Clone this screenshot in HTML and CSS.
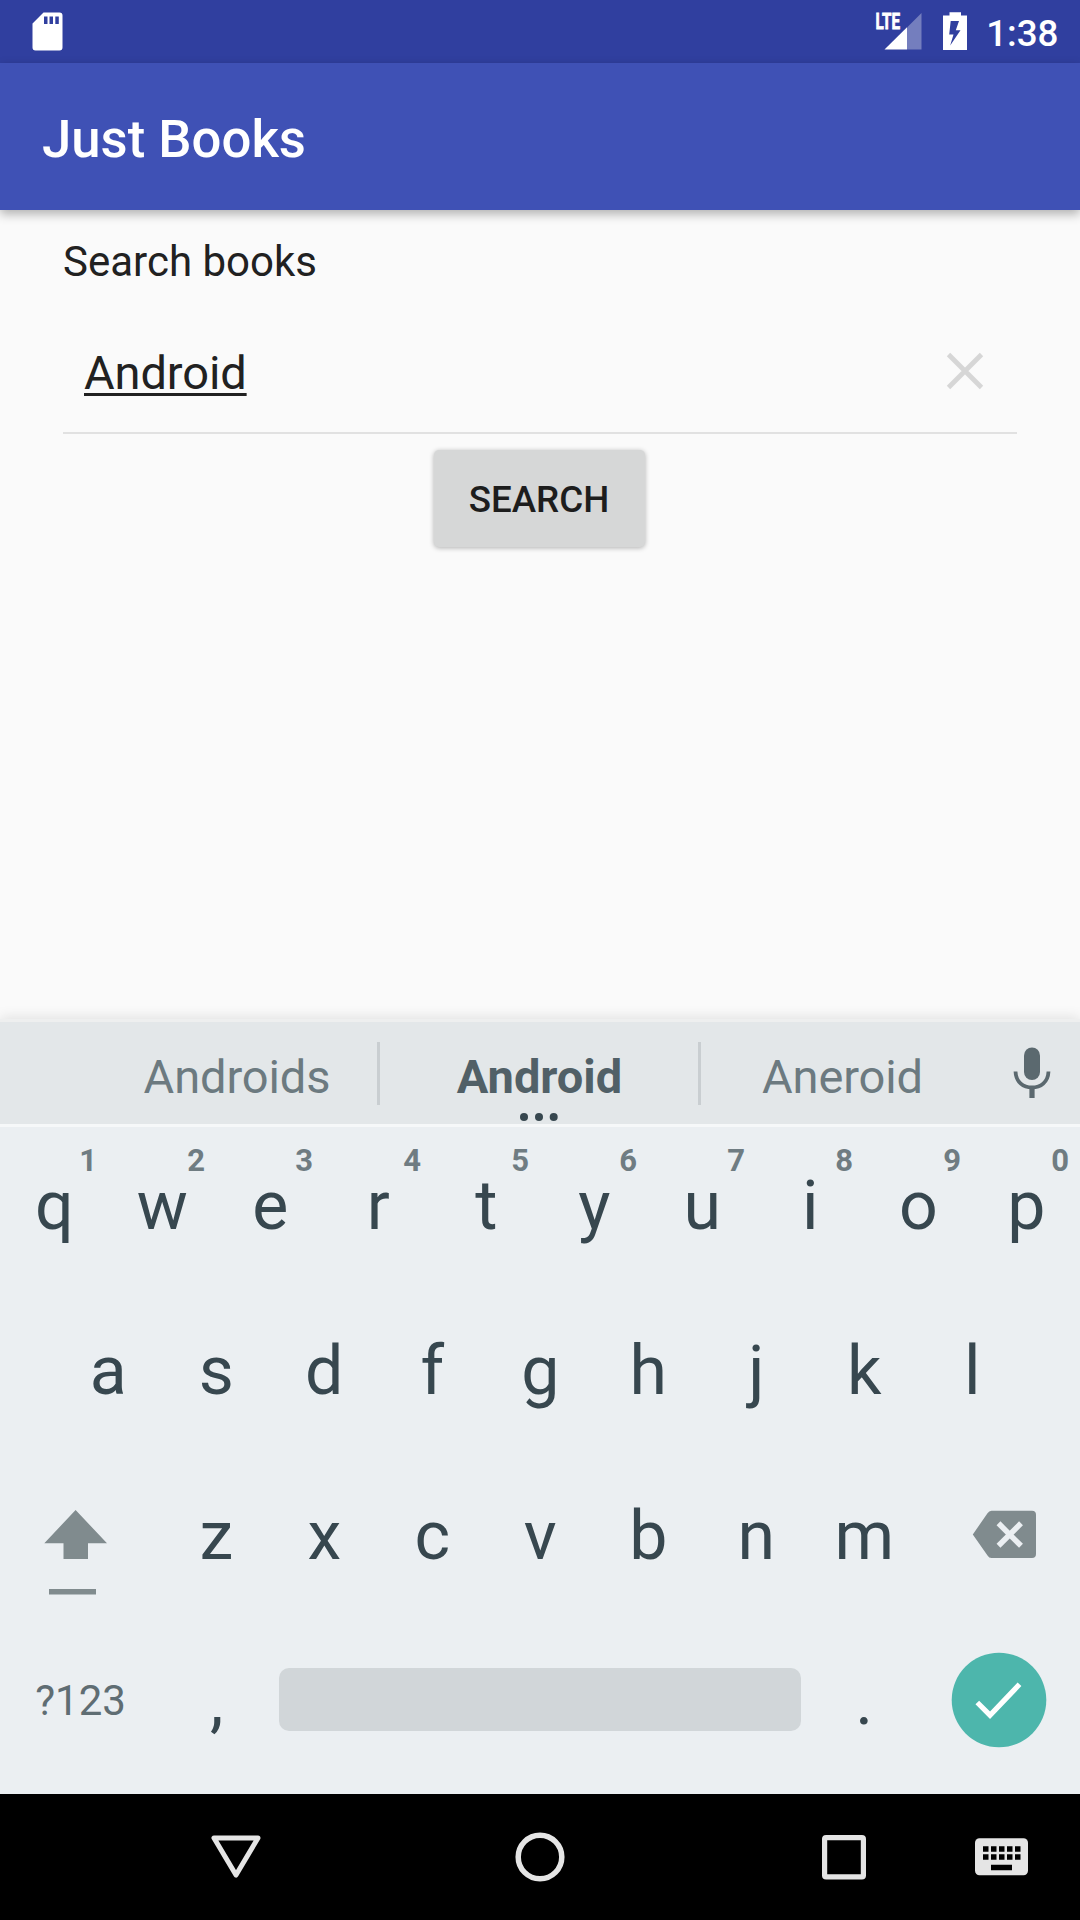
FILE: index.html
```html
<!DOCTYPE html>
<html lang="en">
<head>
<meta charset="utf-8">
<title>Just Books</title>
<link rel="stylesheet" href="styles.css">
</head>
<body>
<div class="screen">
  <header class="status-bar">
    <svg class="status-sd" width="31" height="39" viewBox="0 0 31 39"><path fill="#fff" fill-rule="evenodd" d="M11.500 0.500H27.500a3 3 0 0 1 3 3V35.500a3 3 0 0 1-3 3H3.500a3 3 0 0 1-3-3V11.500ZM12 4.500v7.500h3.500v-7.500ZM17.500 4.500v7.500h3.500v-7.500ZM23.300 4.500v7.500h3.500v-7.500Z"/></svg>
    <div class="status-right">
      <svg class="status-signal" width="54" height="46" viewBox="-6 -8 54 46"><path fill="#fff" fill-opacity=".33" d="M32 15.500 46.500 1v36.500H32Z"/><path fill="#fff" d="M9.500 37.500 32 15.200V37.500Z"/><text class="lte" x="0.500" y="17" textLength="24.500" lengthAdjust="spacingAndGlyphs">LTE</text></svg>
      <svg class="status-battery" width="24" height="38" viewBox="0 0 24 38"><path fill="#fff" fill-rule="evenodd" d="M6.500 0.300H18V3.500H24V38H0V3.500H6.500ZM7.700 9 6.200 22.500H10.500L7.200 33.500 17.500 18.200H12.800L16 9Z"/></svg>
      <span class="clock">1:38</span>
    </div>
  </header>
  <div class="app-bar"><h1>Just Books</h1></div>

  <main class="content">
    <div class="label">Search books</div>
    <div class="search-field">
      <span class="query">Android</span>
      <svg width="38" height="38" viewBox="0 0 38 38"><path d="M2.500 2.500 35.500 35.500M35.500 2.500 2.500 35.500" stroke="#d6d6d6" stroke-width="4.800"/></svg>
    </div>
    <button class="search-button" type="button">SEARCH</button>
  </main>

  <section class="keyboard">
    <div class="suggestions">
      <span class="word">Androids</span>
      <span class="word best">Android<svg class="more" width="40" height="8" viewBox="0 0 40 8"><circle cx="5" cy="4" r="4"/><circle cx="20" cy="4" r="4"/><circle cx="34.700" cy="4" r="4"/></svg></span>
      <span class="word">Aneroid</span>
      <svg class="mic" width="38" height="52" viewBox="0 0 38 52"><rect x="11" y="0.500" width="16" height="32.500" rx="8" fill="#5b696f"/><path d="M2.500 24.500C3 35.500 10.500 40.500 19 40.500S35 35.500 35.500 24.500" fill="none" stroke="#5b696f" stroke-width="3.800"/><path d="M16.400 40H21.600V51H16.400Z" fill="#5b696f"/></svg>
    </div>
    <div class="key-row">
      <span class="key">q<sup>1</sup></span><span class="key">w<sup>2</sup></span><span class="key">e<sup>3</sup></span><span class="key">r<sup>4</sup></span><span class="key">t<sup>5</sup></span><span class="key">y<sup>6</sup></span><span class="key">u<sup>7</sup></span><span class="key">i<sup>8</sup></span><span class="key">o<sup>9</sup></span><span class="key">p<sup>0</sup></span>
    </div>
    <div class="key-row">
      <span class="key">a</span><span class="key">s</span><span class="key">d</span><span class="key">f</span><span class="key">g</span><span class="key">h</span><span class="key">j</span><span class="key">k</span><span class="key">l</span>
    </div>
    <div class="key-row">
      <svg width="162" height="165" viewBox="0 0 162 165"><path fill="#808b8e" d="M75.600 53 107 86.300H88V102H63.500V86.300H44.300ZM49 132H96V137.500H49Z"/></svg>
      <span class="key">z</span><span class="key">x</span><span class="key">c</span><span class="key">v</span><span class="key">b</span><span class="key">n</span><span class="key">m</span>
      <svg width="162" height="165" viewBox="0 0 162 165"><path fill="#808b8e" d="M73.500 53.800H114a4 4 0 0 1 4 4V97a4 4 0 0 1-4 4H73.500Q71 101 69.500 98.500L54.800 77.400 69.500 56.300Q71 53.800 73.500 53.800Z"/><path d="M80.500 66.300 103 88.800M103 66.300 80.500 88.800" stroke="#ebeff2" stroke-width="5.500"/></svg>
    </div>
    <div class="key-row">
      <span class="key symbols">?123</span>
      <span class="key comma">,</span>
      <span class="space"></span>
      <span class="key">.</span>
      <svg width="162" height="165" viewBox="0 0 162 165"><circle cx="81" cy="78" r="47.300" fill="#4db6ac"/><path d="M59.300 80.500 72 93.200 101.500 62.300" fill="none" stroke="#fff" stroke-width="5.200"/></svg>
    </div>
  </section>

  <nav class="nav-bar">
    <svg width="50" height="50" viewBox="0 0 50 50"><path d="M3 6H47L25 43Z" fill="none" stroke="#e5e5e5" stroke-width="5" stroke-linejoin="round"/></svg>
    <svg width="50" height="50" viewBox="0 0 50 50"><circle cx="25" cy="25" r="21.800" fill="none" stroke="#e5e5e5" stroke-width="5.500"/></svg>
    <svg width="50" height="50" viewBox="0 0 50 50"><rect x="5.600" y="5.600" width="38.800" height="39.300" rx="1.500" fill="none" stroke="#e5e5e5" stroke-width="5.200"/></svg>
    <svg width="53" height="38" viewBox="0 0 53 38"><rect y=".3" width="53" height="37" rx="4.500" fill="#e5e5e5"/><path d="M8 11H46M8 19H46" stroke="#000" stroke-width="5.500" stroke-dasharray="5.500 2.500"/><path d="M16 29.500H37" stroke="#000" stroke-width="5.500"/></svg>
  </nav>
</div>
</body>
</html>
```
FILE: styles.css
```css
* { box-sizing: border-box; }
body { margin: 0; font-family: Roboto, sans-serif; }
svg { display: block; flex: none; }

.screen {
  width: 1080px;
  height: 1920px;
  display: flex;
  flex-direction: column;
  background: #fafafa;
  overflow: hidden;
}

/* status bar */
.status-bar {
  height: 63px;
  flex: none;
  display: flex;
  justify-content: space-between;
  padding: 12px 21.500px 0 32px;
  background: #303f9f;
}
.status-right { display: flex; }
.status-signal { margin-top: -8px; overflow: visible; }
.status-battery { margin-left: 20px; }
.lte { font: 700 22px Roboto, sans-serif; fill: #fff; stroke: #fff; stroke-width: .8px; }
.clock {
  margin-left: 19.500px;
  font-size: 36.75px;
  font-weight: 500;
  line-height: 43px;
  color: #fff;
}

/* app bar */
.app-bar {
  height: 147px;
  flex: none;
  display: flex;
  align-items: center;
  padding: 5px 42px 0;
  background: #3f51b5;
  box-shadow: 0 4px 10px rgba(0, 0, 0, .3);
}
.app-bar h1 {
  margin: 0;
  font-size: 52.7px;
  font-weight: 500;
  color: #fff;
}

/* search form */
.content {
  flex: 1;
  display: flex;
  flex-direction: column;
  align-items: center;
  padding: 27px 63px 0;
  color: #212121;
}
.label { align-self: flex-start; font-size: 42px; line-height: 49px; }
.search-field {
  align-self: stretch;
  height: 121px;
  margin-top: 27px;
  padding: 0 33.500px 0 21px;
  display: flex;
  align-items: center;
  justify-content: space-between;
  border-bottom: 2px solid #e1e1e1;
}
.search-field svg { margin-bottom: 4px; }
.query {
  font-size: 47px;
  letter-spacing: -.1px;
  text-decoration: underline;
  text-decoration-thickness: 3px;
  text-underline-offset: 4px;
  text-decoration-skip-ink: none;
}
.search-button {
  width: 211px;
  height: 97px;
  margin: 15.500px 1px 0 0;
  padding: 2px 1px 0 0;
  border: 0;
  border-radius: 5px;
  background: #d6d7d7;
  box-shadow: 0 1px 5px rgba(0, 0, 0, .3);
  color: #1d1d1d;
  font: 500 36.75px Roboto, sans-serif;
}

/* keyboard */
.keyboard {
  flex: none;
  border-top: 3px solid #eeefef;
  background: #ebeff2;
  box-shadow: 0 -2px 12px rgba(0, 0, 0, .1);
}
.suggestions {
  height: 105px;
  display: grid;
  grid-template-columns: 284px 321px 285px 95px;
  padding-left: 95px;
  background: #e3e7e9;
  border-bottom: 3px solid #f6f8f9;
}
.word {
  position: relative;
  font-size: 47px;
  letter-spacing: -.1px;
  line-height: 107px;
  height: 102px;
  padding-top: 1px;
  text-align: center;
  color: #6c7a80;
}
.word + .word::before {
  content: "";
  position: absolute;
  left: -2px;
  top: 20px;
  width: 3px;
  height: 63px;
  background: #c9ced1;
}
.best { font-weight: 700; letter-spacing: 0; color: #516067; }
.more {
  position: absolute;
  left: 140px;
  bottom: 3.500px;
  fill: #37474f;
}
.mic { margin: 25px 0 0 28px; }

.key-row { display: flex; justify-content: center; height: 165px; }
.key-row:last-child { height: 172px; }
.key {
  position: relative;
  width: 108px;
  padding-left: .6px;
  font-size: 68px;
  line-height: 158px;
  text-align: center;
  color: #37474f;
}
.key sup {
  position: absolute;
  right: 11px;
  top: 16px;
  font-size: 31px;
  font-weight: 700;
  line-height: 36px;
  color: #6f7c82;
}
.key.symbols { width: 162px; padding-right: 1.500px; font-size: 42px; color: #5f6d73; }
.key.comma { padding-left: 1.500px; }
.space {
  width: 522px;
  height: 63px;
  margin: 46px 9px 0;
  border-radius: 10px;
  background: #d1d6d9;
}

/* navigation */
.nav-bar {
  height: 126px;
  flex: none;
  display: grid;
  grid-template-columns: 304px 304px 156px 105px;
  justify-content: end;
  align-items: center;
  background: #000;
}
```
